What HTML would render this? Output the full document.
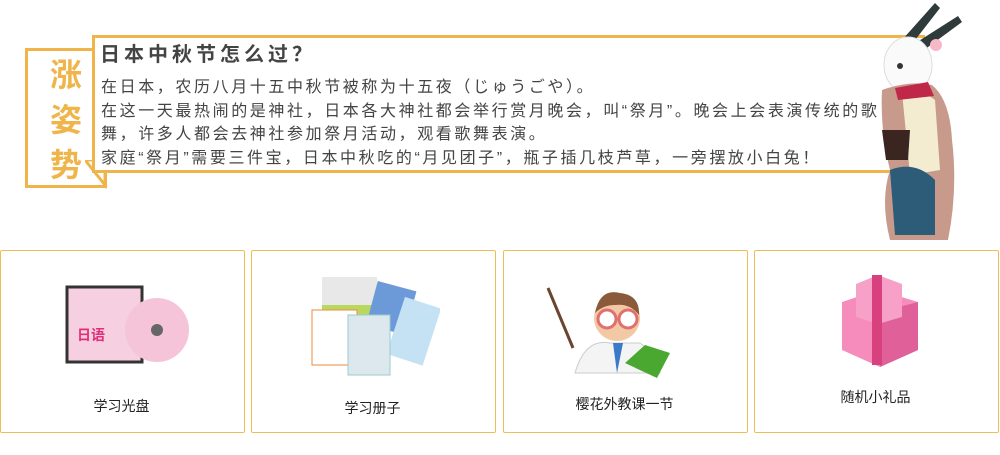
<!DOCTYPE html>
<html><head><meta charset="utf-8"><style>
body{margin:0;width:1000px;height:455px;background:#fff;position:relative;overflow:hidden;font-family:"Liberation Sans","Noto Sans CJK SC",sans-serif;}
.abs{position:absolute}
.tag{left:25px;top:48px;width:76px;height:134px;border:3px solid #efb54a;background:#fff;}
.tagtxt{left:28px;top:53px;width:76px;text-align:center;color:#efb54a;font-size:32px;font-weight:bold;line-height:45px}
.main{left:92px;top:35px;width:830px;height:132px;border-top:3px solid #efb54a;border-bottom:3px solid #efb54a;border-left:3px solid #efb54a;background:#fff}
.title{left:100px;top:38px;font-size:20px;font-weight:bold;color:#444;letter-spacing:4px}
.body{left:101px;top:76px;font-size:16px;color:#444;line-height:23.5px;width:800px;letter-spacing:2.6px;white-space:nowrap}
.card{top:250px;width:243px;height:181px;border:1px solid #f0bd55;border-radius:2px}
.lbl{font-size:14px;color:#222;width:243px;text-align:center}
</style></head><body>
<div class="abs tag"></div>
<svg class="abs" style="left:85px;top:160px" width="26" height="30"><polygon points="0,0 20,0 20,25" fill="#fff" stroke="#efb54a" stroke-width="3"/></svg>
<div class="abs main"></div>
<div class="abs tagtxt">涨<br>姿<br>势</div>
<div class="abs title">日本中秋节怎么过？</div>
<div class="abs body">在日本，农历八月十五中秋节被称为十五夜（じゅうごや）。<br>在这一天最热闹的是神社，日本各大神社都会举行赏月晚会，叫“祭月”。晚会上会表演传统的歌<br>舞，许多人都会去神社参加祭月活动，观看歌舞表演。<br>家庭“祭月”需要三件宝，日本中秋吃的“月见团子”，瓶子插几枝芦草，一旁摆放小白兔！</div>
<svg class="abs" style="left:870px;top:0" width="130" height="250">
<g transform="translate(-30,0)">
<path d="M62 40 L95 3 L100 8 L72 44Z" fill="#2f3a3a"/>
<path d="M74 44 L118 16 L122 22 L84 50Z" fill="#2f3a3a"/>
<ellipse cx="68" cy="65" rx="24" ry="28" fill="#fafafa" stroke="#ddd"/>
<circle cx="96" cy="45" r="6" fill="#f7b8c8"/>
<circle cx="60" cy="66" r="3" fill="#333"/>
<path d="M42 90 Q70 80 92 85 Q110 100 112 140 Q118 190 108 240 L50 240 Q40 200 50 170 Q40 130 42 90Z" fill="#c79a8c"/>
<path d="M62 92 Q80 88 95 100 L100 170 L70 175Z" fill="#f4ecd0"/>
<path d="M50 170 Q75 160 95 180 L95 235 L55 235Z" fill="#2d5c78"/>
<path d="M42 130 L70 130 L68 160 L46 160Z" fill="#3a2520"/>
<path d="M55 88 L88 82 L94 96 L58 100Z" fill="#c0284a"/>
</g>
</svg>
<div class="abs card" style="left:0"></div>
<div class="abs card" style="left:251px"></div>
<div class="abs card" style="left:503px"></div>
<div class="abs card" style="left:754px"></div>
<svg class="abs" style="left:62px;top:275px" width="130" height="95">
<rect x="5" y="12" width="75" height="75" fill="#f6cfe0" stroke="#333" stroke-width="3"/>
<circle cx="95" cy="55" r="32" fill="#f5c4d8"/>
<circle cx="95" cy="55" r="6" fill="#666"/>
<text x="15" y="65" font-size="14" fill="#e0307a" font-weight="bold" font-family="Noto Sans CJK SC">日语</text>
</svg>
<div class="abs lbl" style="left:0;top:396px">学习光盘</div>
<svg class="abs" style="left:310px;top:275px" width="130" height="105">
<rect x="12" y="2" width="55" height="50" fill="#e8e8e8"/><rect x="12" y="30" width="55" height="20" fill="#b8d860"/>
<rect x="62" y="10" width="40" height="45" fill="#6c9ad8" transform="rotate(15 80 30)"/>
<rect x="85" y="25" width="38" height="60" fill="#c4e2f4" transform="rotate(18 100 55)"/>
<rect x="2" y="35" width="45" height="55" fill="#fff" stroke="#f08a3a"/>
<rect x="38" y="40" width="42" height="60" fill="#dce8ee" stroke="#9cc"/>
</svg>
<div class="abs lbl" style="left:251px;top:398px">学习册子</div>
<svg class="abs" style="left:545px;top:283px" width="135" height="95">
<line x1="3" y1="5" x2="28" y2="65" stroke="#6a4530" stroke-width="3"/>
<path d="M30 90 Q40 55 65 60 L95 60 Q110 70 115 90Z" fill="#f4f4f4" stroke="#ccc"/>
<path d="M68 60 L72 90 L78 60Z" fill="#3a7ac8"/>
<circle cx="72" cy="35" r="23" fill="#f2c9a4"/>
<path d="M50 30 Q55 5 75 10 Q95 12 94 32 Q85 20 70 22 Q58 22 50 30Z" fill="#8a5a3a"/>
<circle cx="62" cy="36" r="9" fill="#fff" stroke="#e07070" stroke-width="3"/><circle cx="83" cy="36" r="9" fill="#fff" stroke="#e07070" stroke-width="3"/>
<path d="M80 80 L100 62 L125 70 L112 95 Z" fill="#4aa830"/>
</svg>
<div class="abs lbl" style="left:503px;top:394px">樱花外教课一节</div>
<svg class="abs" style="left:840px;top:272px" width="80" height="95">
<path d="M2 30 L38 18 L78 30 L78 78 L40 95 L2 78Z" fill="#f58cbc"/>
<path d="M40 40 L78 30 L78 78 L40 95Z" fill="#e0609a"/>
<path d="M16 12 L38 3 L62 12 L62 45 L38 52 L16 45Z" fill="#f7a0c8"/>
<rect x="32" y="3" width="10" height="90" fill="#d8407e"/>
</svg>
<div class="abs lbl" style="left:754px;top:387px">随机小礼品</div>
</body></html>
